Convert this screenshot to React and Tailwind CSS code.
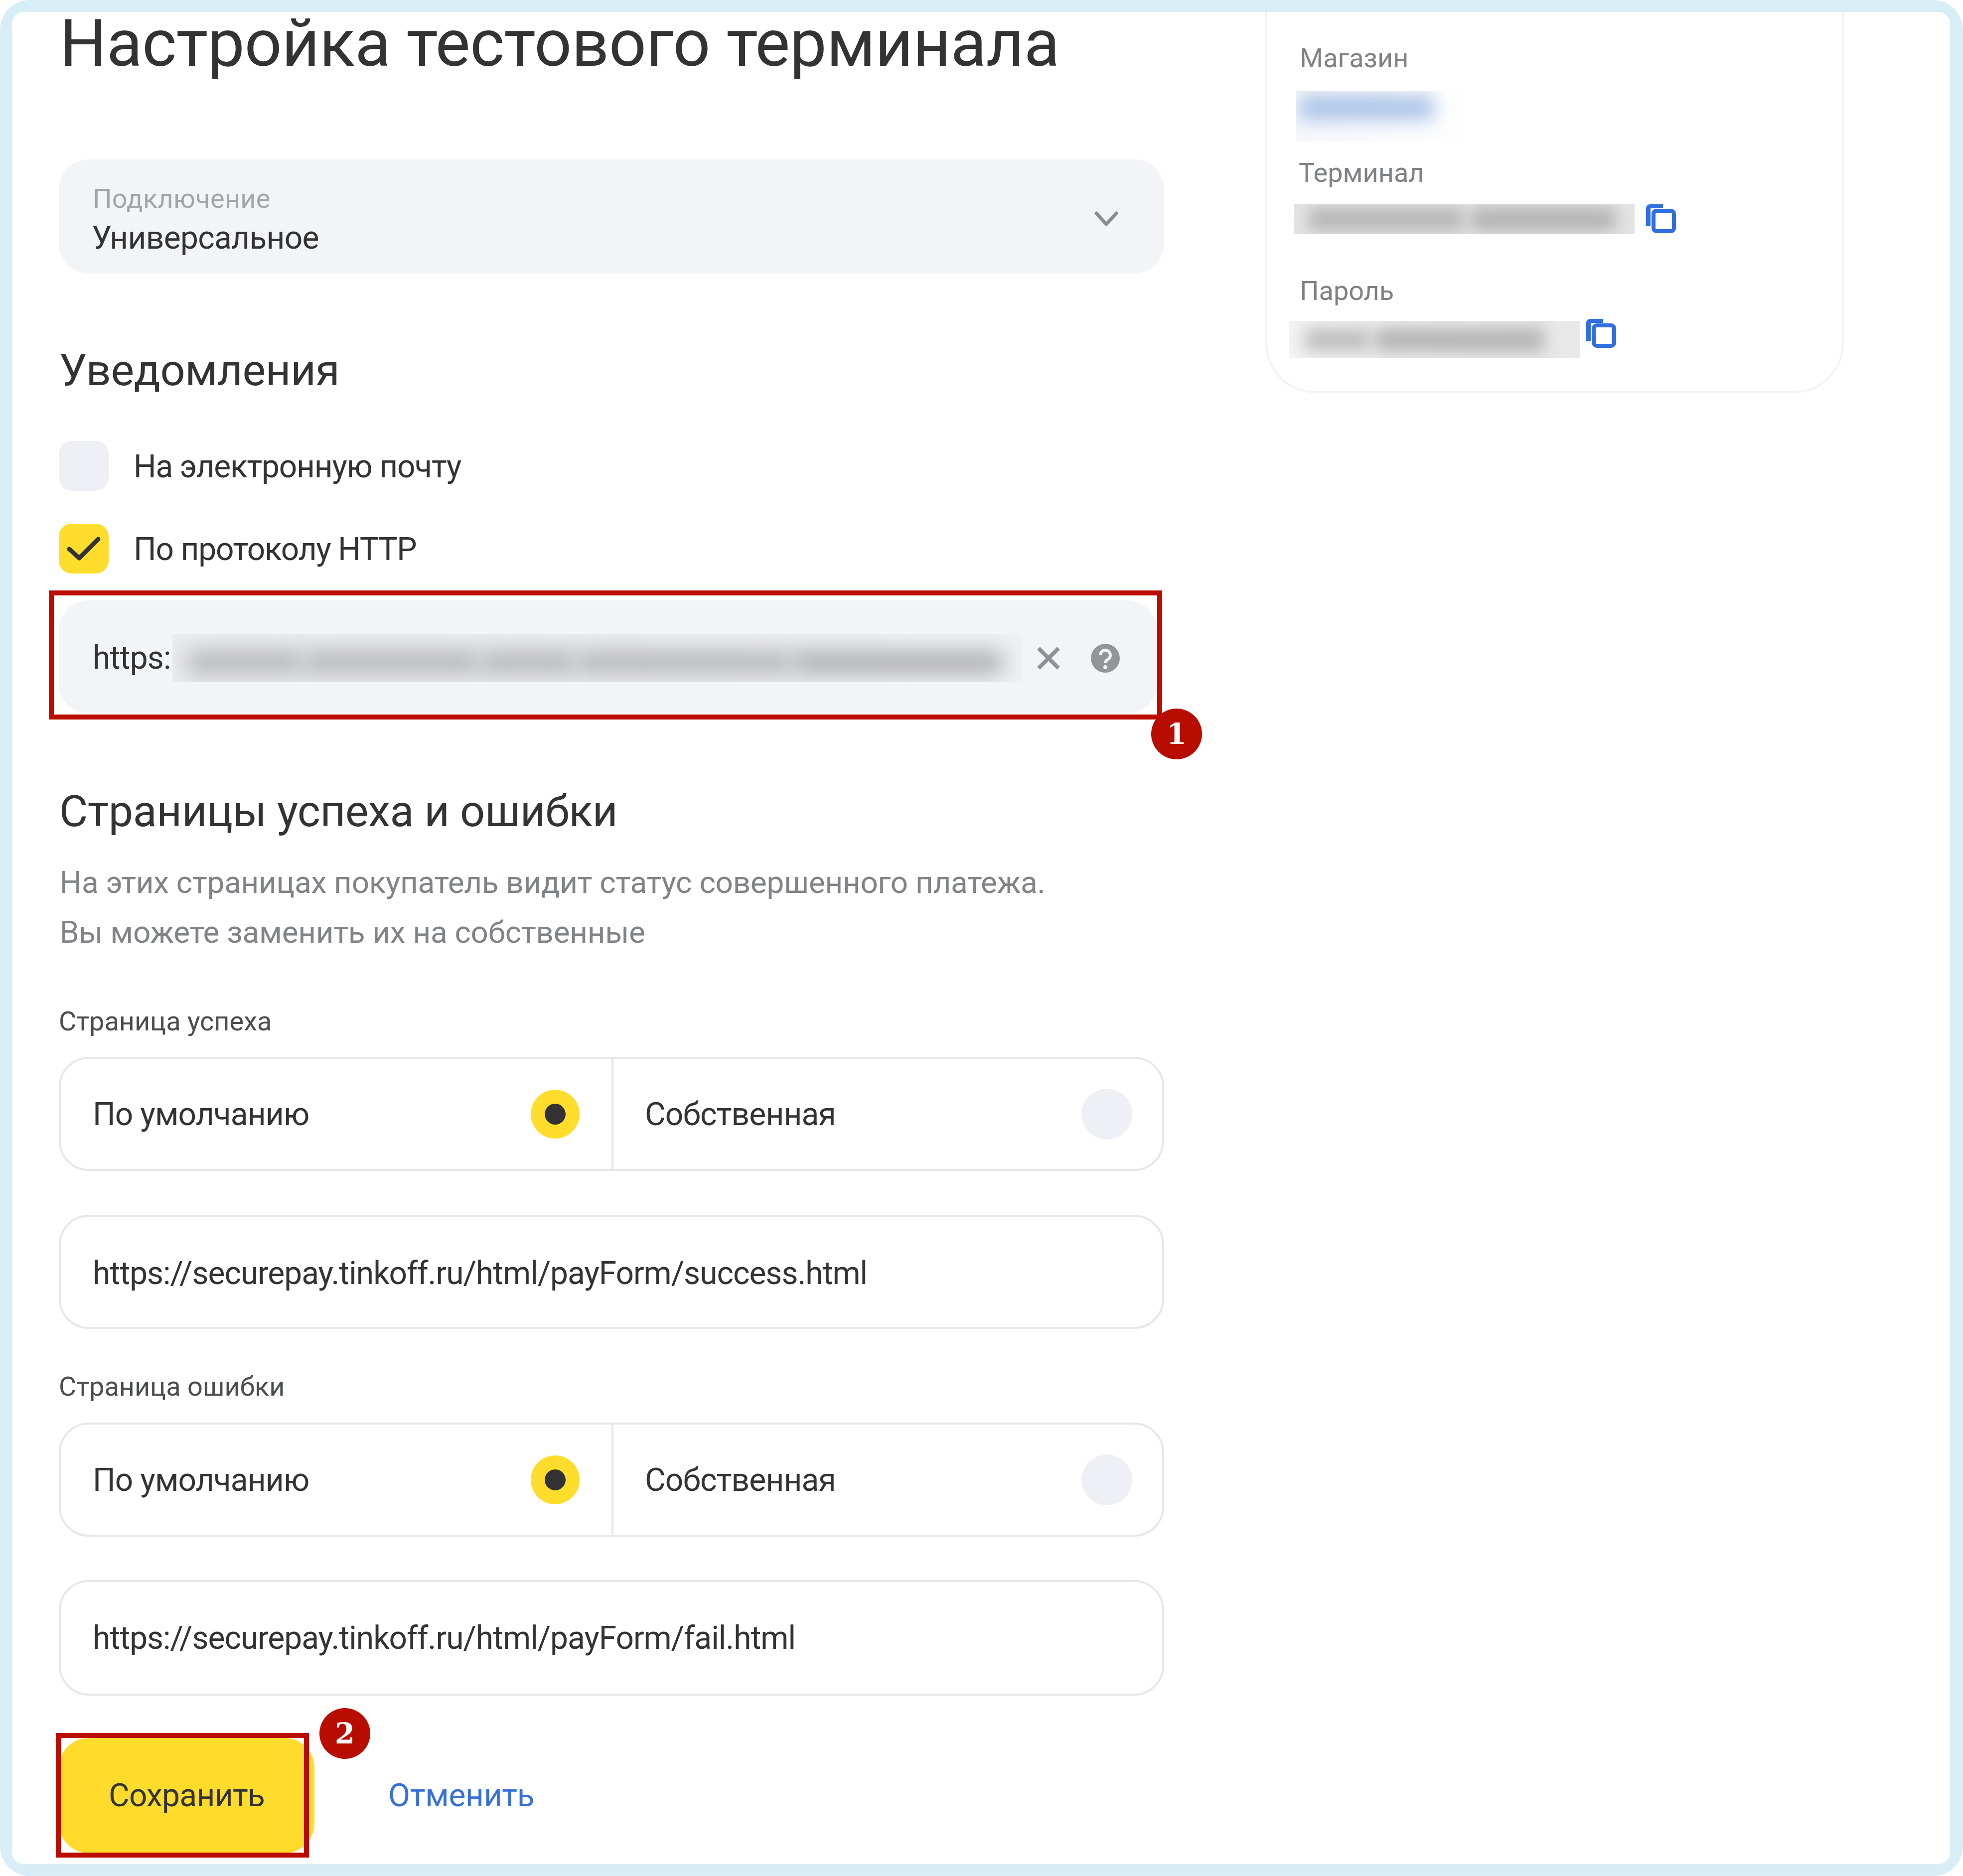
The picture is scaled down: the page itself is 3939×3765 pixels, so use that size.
const font = { fontFamily: 'Roboto, "Liberation Sans", sans-serif' };

function Chevron() {
  return (
    <svg width="48" height="34" viewBox="0 0 48 34" fill="none" stroke="#8a8d92" strokeWidth="7" strokeLinecap="round" strokeLinejoin="round">
      <polyline points="4,6 24,28 44,6" />
    </svg>
  );
}

function CopyIcon() {
  return (
    <svg width="60" height="58" viewBox="0 0 60 58" fill="none">
      <path d="M0 8a8 8 0 0 1 8-8h26v8H9v36H0z" fill="#2f6fdf" />
      <rect x="15" y="13" width="41" height="41" rx="6" stroke="#2f6fdf" strokeWidth="8" fill="#fff" />
    </svg>
  );
}

function Badge({ n, className }) {
  return (
    <div className={`absolute w-[102px] h-[102px] rounded-full bg-[#b90c00] flex items-center justify-center text-white text-[58px] font-bold ${className}`}
      style={{ fontFamily: '"DejaVu Serif", serif' }}>{n}</div>
  );
}

function Radio({ on }) {
  return on ? (
    <div className="w-[98px] h-[98px] rounded-full bg-[#ffdd2d] flex items-center justify-center">
      <div className="w-[42px] h-[42px] rounded-full bg-[#333]" />
    </div>
  ) : (
    <div className="w-[102px] h-[102px] rounded-full bg-[#eef0f5]" />
  );
}

function RadioRow({ className }) {
  return (
    <div className={`flex h-[229px] rounded-[60px] border-[4px] border-[#e6e7ea] text-[64px] text-[#333] tracking-[-0.85px] ${className}`}>
      <div className="w-[1109px] flex items-center justify-between pl-[64px] pr-[64px] border-r-[4px] border-[#e6e7ea]">
        <span className="pt-[3px]">По умолчанию</span>
        <Radio on />
      </div>
      <div className="flex-1 flex items-center justify-between pl-[63px] pr-[60px]">
        <span className="pt-[3px]">Собственная</span>
        <Radio />
      </div>
    </div>
  );
}

function UrlBox({ children, className }) {
  return (
    <div className={`flex items-center rounded-[60px] border-[4px] border-[#e6e7ea] pl-[64px] text-[64px] text-[#333] tracking-[-1px] ${className}`}>
      {children}
    </div>
  );
}

function Checkbox({ on, label, className }) {
  return (
    <div className={`flex items-center gap-[50px] ${className}`}>
      <div className={`w-[100px] h-[100px] rounded-[26px] flex items-center justify-center ${on ? 'bg-[#ffdd2d]' : 'bg-[#eef0f5]'}`}>
        {on && (
          <svg width="70" height="50" viewBox="0 0 70 50" fill="none" stroke="#333" strokeWidth="9" strokeLinecap="round" strokeLinejoin="round">
            <polyline points="6,26 26,44 64,6" />
          </svg>
        )}
      </div>
      <span className="pt-[3px] text-[64px] tracking-[-1.2px] text-[#333]">{label}</span>
    </div>
  );
}

function InfoCard() {
  return (
    <div className="ml-[203px] w-[1161px] h-[765px] overflow-hidden shrink-0">
      <div className="w-[1153px] h-[857px] -mt-[100px] box-content rounded-[100px] border-[4px] border-[#f3f3f5] text-[54px] text-[#7f8185]">
        <div className="pl-[65px] pt-[153px] leading-[72px]">Магазин</div>
        <div className="ml-[58px] mt-[29px] w-[362px] h-[102px] overflow-hidden bg-gradient-to-r from-[#f5f7fb] to-white">
          <div className="ml-[6px] mt-[10px] w-[270px] h-[48px] bg-[#a9c2e8] blur-[18px]" />
        </div>
        <div className="pl-[63px] mt-[27px] leading-[72px]">Терминал</div>
        <div className="flex mt-[27px]">
          <div className="ml-[53px] w-[684px] h-[60px] overflow-hidden bg-[#e4e4e4] flex gap-[16px] items-center px-[30px]">
            <div className="w-[310px] h-[44px] bg-[#b4b4b4] blur-[16px]" />
            <div className="w-[290px] h-[44px] bg-[#b0b0b0] blur-[16px]" />
          </div>
          <div className="ml-[23px]"><CopyIcon /></div>
        </div>
        <div className="pl-[65px] mt-[78px] leading-[72px]">Пароль</div>
        <div className="flex mt-[24px]">
          <div className="ml-[44px] w-[583px] h-[75px] overflow-hidden bg-gradient-to-r from-[#f3f3f3] to-[#e8e8e8] flex gap-[10px] items-center px-[32px]">
            <div className="w-[130px] h-[44px] bg-[#bcbcbc] blur-[16px]" />
            <div className="w-[340px] h-[48px] bg-[#b4b4b4] blur-[16px]" />
          </div>
          <div className="ml-[13px] -mt-[4px]"><CopyIcon /></div>
        </div>
      </div>
    </div>
  );
}

export default function App() {
  return (
    <div className="w-[3939px] h-[3765px] bg-[#d8eef7] rounded-[60px] pl-[24px] pr-[26px] py-[24px]" style={font}>
      <div className="flex h-full bg-white rounded-[24px]">
        <div className="w-[2218px] ml-[94px] shrink-0">
          <h1 className="ml-[2px] text-[132px] leading-[126px] tracking-[-0.45px] text-[#333] whitespace-nowrap">Настройка тестового терминала</h1>

          <div className="relative mt-[170px] h-[229px] rounded-[60px] bg-[#f3f4f7] pl-[66px] pt-[44px]">
            <div className="ml-[2px] text-[54px] leading-[70px] tracking-[0.3px] text-[#a3a5a9]">Подключение</div>
            <div className="text-[64px] leading-[88px] tracking-[-0.7px] text-[#333]">Универсальное</div>
            <div className="absolute right-[92px] top-[102px]"><Chevron /></div>
          </div>

          <h2 className="ml-[1px] mt-[144px] text-[88px] leading-[100px] font-[450] tracking-[-0.4px] text-[#333]">Уведомления</h2>
          <Checkbox className="mt-[92px]" label="На электронную почту" />
          <Checkbox className="mt-[66px]" on label="По протоколу HTTP" />

          <div className="relative mt-[54px] w-[2204px] h-[227px] rounded-[60px] bg-[#f3f4f7] flex items-center pl-[68px] pt-[5px]">
            <span className="text-[64px] tracking-[-0.8px] text-[#333]">https:</span>
            <div className="ml-[3px] w-[1705px] h-[97px] -mt-[2px] overflow-hidden bg-gradient-to-r from-[#ebecef] via-[#ebecef] to-[#f0f1f4] flex items-center gap-[4px] pl-[30px] pt-[18px]">
              <div className="w-[230px] h-[46px] bg-[#b4b5b8] blur-[22px]" />
              <div className="w-[350px] h-[46px] bg-[#b4b5b8] blur-[22px]" />
              <div className="w-[190px] h-[46px] bg-[#b4b5b8] blur-[22px]" />
              <div className="w-[430px] h-[46px] bg-[#b4b5b8] blur-[22px]" />
              <div className="w-[420px] h-[46px] bg-[#acadb0] blur-[22px]" />
            </div>
            <svg className="ml-[30px]" width="46" height="46" viewBox="0 0 46 46" fill="none" stroke="#8f9196" strokeWidth="8">
              <path d="M3 3l40 40M43 3L3 43" />
            </svg>
            <svg className="ml-[62px]" width="58" height="58" viewBox="0 0 58 58">
              <circle cx="29" cy="29" r="29" fill="#939598" />
              <path d="M19 23a10 10 0 1 1 15 8.5c-3.5 2-5 3.5-5 7" fill="none" stroke="#f3f4f7" strokeWidth="6" />
              <circle cx="29" cy="47" r="4" fill="#f3f4f7" />
            </svg>
            <div className="absolute -left-[20px] -top-[20px] w-[2234px] h-[259px] border-[10px] border-[#bb0c00]" />
            <Badge n="1" className="left-[2192px] top-[217px]" />
          </div>

          <h2 className="ml-[1px] mt-[146px] text-[88px] leading-[100px] font-[450] tracking-[-0.4px] text-[#333]">Страницы успеха и ошибки</h2>
          <p className="ml-[2px] mt-[43px] text-[62px] leading-[100px] tracking-[-0.27px] text-[#808387]">
            На этих страницах покупатель видит статус совершенного платежа.<br />
            Вы можете заменить их на собственные
          </p>

          <div className="mt-[99px] text-[54px] leading-[60px] text-[#4a4c50]">Страница успеха</div>
          <RadioRow className="mt-[41px]" />
          <UrlBox className="mt-[88px] h-[229px] pt-[6px]">https://securepay.tinkoff.ru/html/payForm/success.html</UrlBox>

          <div className="mt-[86px] text-[54px] leading-[60px] text-[#4a4c50]">Страница ошибки</div>
          <RadioRow className="mt-[42px]" />
          <UrlBox className="mt-[87px] h-[232px] pt-[2px]">https://securepay.tinkoff.ru/html/payForm/fail.html</UrlBox>

          <div className="flex items-center mt-[85px]">
            <div className="relative">
              <button className="w-[513px] h-[231px] rounded-[60px] bg-[#ffdc2b] text-[64px] tracking-[-0.7px] text-[#333]" style={font}>Сохранить</button>
              <div className="absolute -left-[6px] -top-[10px] w-[508px] h-[250px] border-[10px] border-[#bb0c00]" />
              <Badge n="2" className="left-[523px] -top-[60px]" />
            </div>
            <span className="ml-[148px] text-[64px] tracking-[-0.3px] text-[#3670d8]">Отменить</span>
          </div>
        </div>

        <InfoCard />
      </div>
    </div>
  );
}
